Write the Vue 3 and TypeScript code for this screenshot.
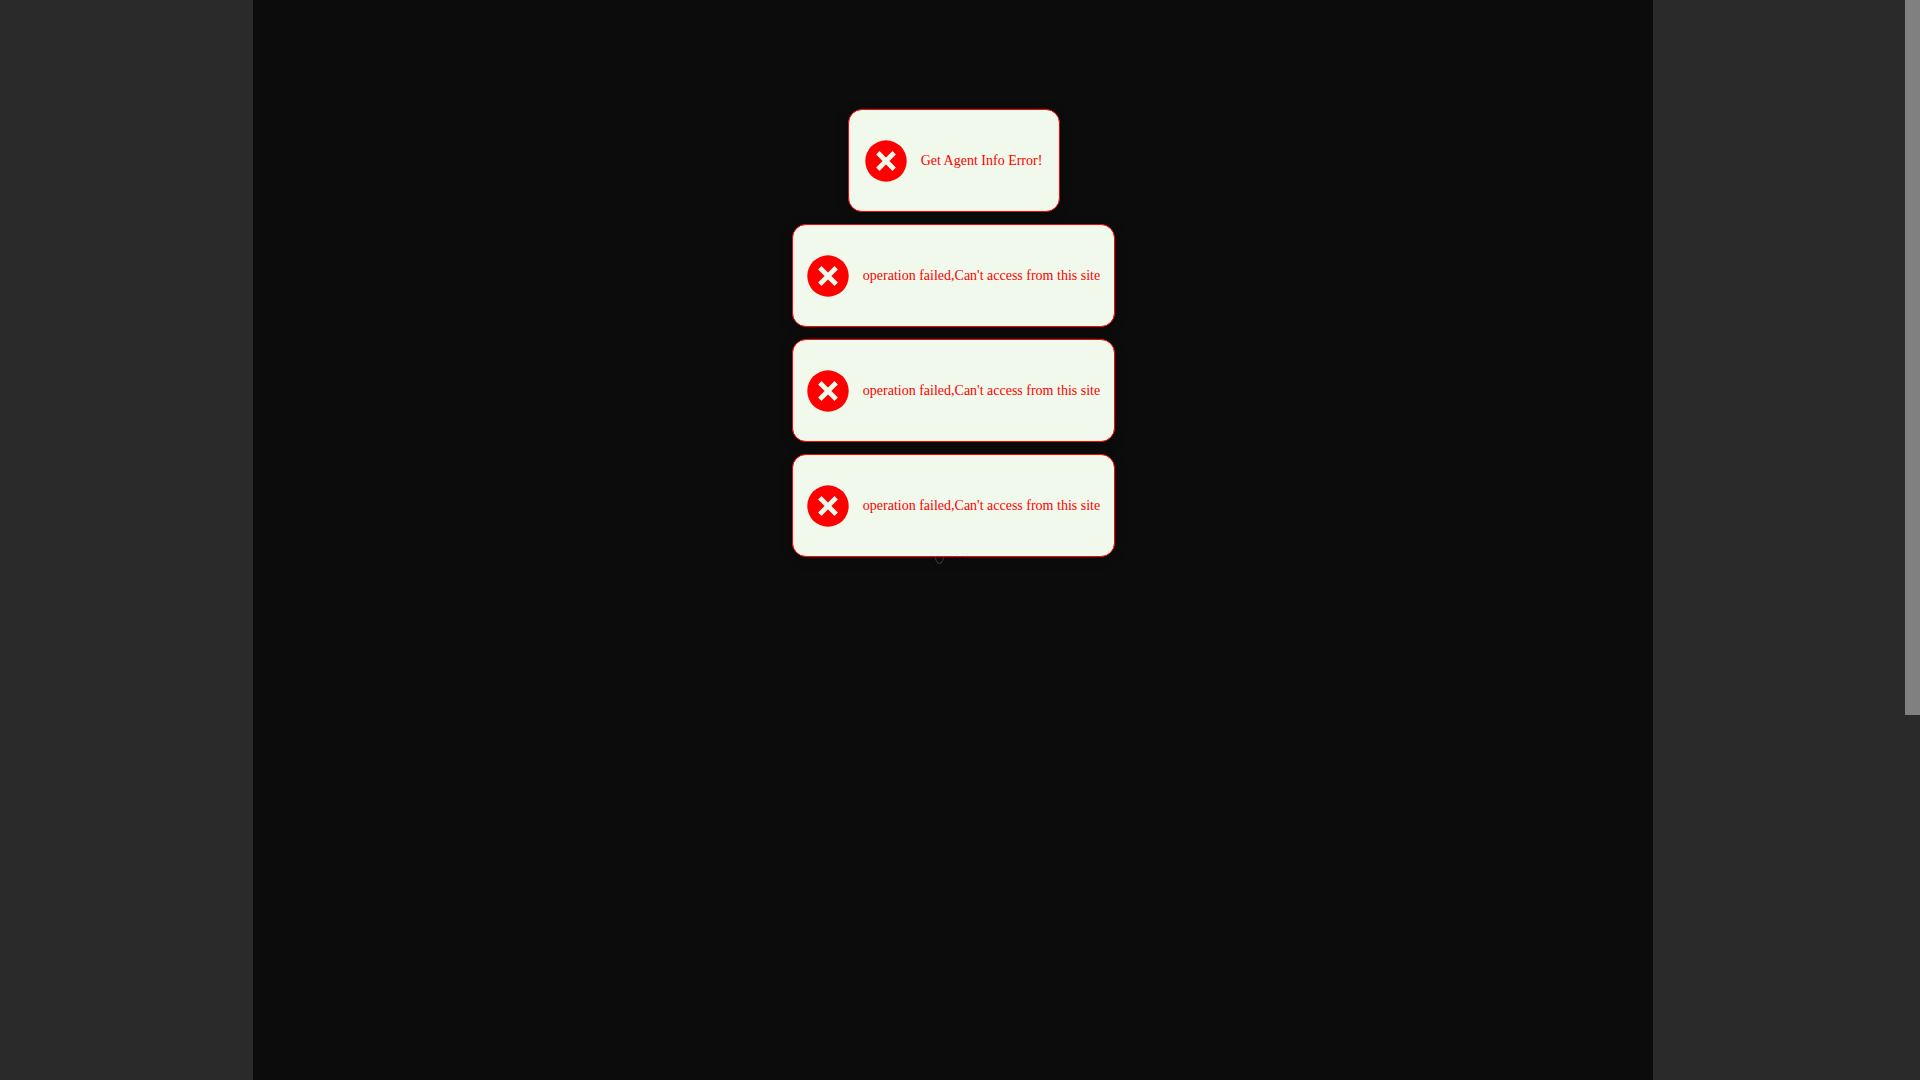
<script setup lang="ts">
interface Notice {
  id: number
  text: string
}

const denied = "operation failed,Can't access from this site"

const notices: Notice[] = [
  { id: 1, text: 'Get Agent Info Error!' },
  { id: 2, text: denied },
  { id: 3, text: denied },
  { id: 4, text: denied },
]
</script>

<template>
  <div class="page">
    <div class="backdrop">
      <main class="stage">
        <div class="notices">
          <div v-for="notice in notices" :key="notice.id" class="notice" role="alert">
            <svg class="icon" viewBox="0 0 42 42" aria-hidden="true">
              <circle cx="21" cy="21" r="20.7" fill="#ff0000" />
              <path d="M12.8 12.8 29.2 29.2M29.2 12.8 12.8 29.2" stroke="#f0f9eb" stroke-width="4.8" />
            </svg>
            <p class="text">{{ notice.text }}</p>
          </div>
          <svg class="loader" viewBox="0 0 42 16" aria-hidden="true">
            <ellipse cx="6.5" cy="4.5" rx="4.6" ry="10" fill="none" stroke="#484848" stroke-width="1" />
            <path d="M18 8.5h2M24 8.5h2M32 8.5h2" stroke="#222222" stroke-width="1" />
          </svg>
        </div>
      </main>
    </div>
    <div class="scrollbar"><div class="thumb"></div></div>
  </div>
</template>

<style>
body {
  margin: 0;
  background: #2a2a2a;
}
</style>

<style scoped>
.page {
  display: flex;
  height: 100vh;
  overflow: hidden;
  background: #2a2a2a;
}

.backdrop {
  flex: 1;
  display: flex;
  justify-content: center;
}

.stage {
  width: 100%;
  max-width: 1400px;
  background: #0c0c0c;
}

.notices {
  position: relative;
  z-index: 0;
  display: flex;
  flex-direction: column;
  align-items: center;
  gap: 12px;
  padding: 109px 0 0 2px;
}

.notice {
  box-sizing: border-box;
  display: flex;
  align-items: center;
  justify-content: center;
  gap: 14px;
  min-width: 212px;
  height: 103px;
  padding: 0 14px;
  border: 1px solid #ff0000;
  border-radius: 14px;
  background: #f0f9eb;
  box-shadow: 0 2px 12px rgba(0, 0, 0, 0.3);
}

.icon {
  flex: none;
  width: 42px;
  height: 42px;
}

.text {
  margin: 0;
  font-family: "Liberation Serif", "Times New Roman", serif;
  font-size: 14px;
  line-height: 20px;
  color: #ff0000;
  white-space: nowrap;
}

.loader {
  position: absolute;
  z-index: -1;
  left: 50%;
  bottom: -8px;
  width: 42px;
  height: 16px;
  margin-left: -20px;
}

.scrollbar {
  flex: none;
  width: 15px;
  background: #2a2a2a;
}

.thumb {
  height: 66.2%;
  background: #808080;
}
</style>
